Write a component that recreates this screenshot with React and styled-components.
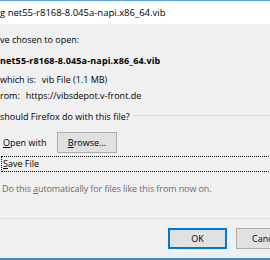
import React from 'react';
import styled, { createGlobalStyle } from 'styled-components';

const GlobalStyle = createGlobalStyle`
  html, body {
    margin: 0;
    padding: 0;
    background: #f0f0f0;
  }
`;

const Window = styled.div`
  width: 270px;
  height: 260px;
  overflow: hidden;
  display: flex;
  flex-direction: column;
  background: #f0f0f0;
  border-top: 1px solid #5d9fdf;
  box-sizing: border-box;
  font-family: "Open Sans", "Noto Sans", sans-serif;
  font-size: 9px;
  color: #000;
`;

const TitleBar = styled.div`
  height: 23px;
  line-height: 23px;
  background: #fff;
  white-space: nowrap;
  font-size: 9.5px;
`;

const Body = styled.div`
  display: flex;
  flex-direction: column;
  padding-top: 8px;
`;

const Line = styled.div`
  height: 16px;
  line-height: 16px;
  white-space: nowrap;
  margin-top: ${({ gap }) => gap || 0}px;
  font-weight: ${({ bold }) => (bold ? 700 : 400)};
  letter-spacing: ${({ bold }) => (bold ? '0.15px' : 'normal')};
  display: flex;
  gap: 6px;
`;

const Caption = styled.div`
  height: 16px;
  margin-top: 5px;
  display: flex;
  align-items: center;
  white-space: nowrap;
  line-height: 16px;
`;

const CaptionRule = styled.div`
  flex: 1;
  height: 1px;
  margin: 0 0 4px 3px;
  background: #dcdcdc;
`;

const OptionRow = styled.div`
  display: flex;
  align-items: center;
  height: 21px;
  margin-top: 7px;
  padding-left: 3px;
`;

const OptionLabel = styled.span`
  width: 54px;
  white-space: nowrap;
`;

const Key = styled.u`
  text-decoration: underline;
  text-underline-offset: 1px;
`;

const Button = styled.button`
  width: ${({ w }) => w || 60}px;
  height: 21px;
  padding: 0;
  font: inherit;
  color: #000;
  background: #e1e1e1;
  border: 1px solid ${({ focus }) => (focus ? '#0078d7' : '#adadad')};
  box-shadow: ${({ focus }) => (focus ? 'inset 0 0 0 1px #0078d7' : 'none')};
  flex-shrink: 0;
`;

const FocusedOption = styled.div`
  margin: 3px 0 0 1px;
  width: 290px;
  height: 16px;
  box-sizing: border-box;
  border: 1px dotted #000;
  line-height: 14px;
  padding-left: 1px;
  white-space: nowrap;
`;

const Disabled = styled.div`
  margin-top: 9px;
  height: 16px;
  line-height: 16px;
  padding-left: 2px;
  color: #6d6d6d;
  white-space: nowrap;
  letter-spacing: -0.1px;
`;

const Rule = styled.div`
  height: 1px;
  background: #dcdcdc;
  margin-top: ${({ gap }) => gap}px;
`;

const ButtonRow = styled.div`
  display: flex;
  gap: 9px;
  padding-left: 168px;
  margin-top: 9px;
`;

const BottomEdge = styled.div`
  margin-top: auto;
  height: 2px;
  background: #3d8ad9;
`;

export default function App() {
  return (
    <>
      <GlobalStyle />
      <Window>
        <TitleBar>g net55-r8168-8.045a-napi.x86_64.vib</TitleBar>
        <Body>
          <Line>ve chosen to open:</Line>
          <Line gap={5} bold>net55-r8168-8.045a-napi.x86_64.vib</Line>
          <Line gap={3}>
            <span>which is:</span>
            <span>vib File (1.1 MB)</span>
          </Line>
          <Line>
            <span>rom:</span>
            <span>https://vibsdepot.v-front.de</span>
          </Line>
          <Caption>
            should Firefox do with this file?
            <CaptionRule />
          </Caption>
          <OptionRow>
            <OptionLabel>
              <Key>O</Key>pen with
            </OptionLabel>
            <Button>
              <Key>B</Key>rowse...
            </Button>
          </OptionRow>
          <FocusedOption>
            <Key>S</Key>ave File
          </FocusedOption>
          <Disabled>
            Do this <Key>a</Key>utomatically for files like this from now on.
          </Disabled>
          <Rule gap={21} />
          <ButtonRow>
            <Button focus w={59}>OK</Button>
            <Button w={60}>Cancel</Button>
          </ButtonRow>
        </Body>
        <BottomEdge />
      </Window>
    </>
  );
}
